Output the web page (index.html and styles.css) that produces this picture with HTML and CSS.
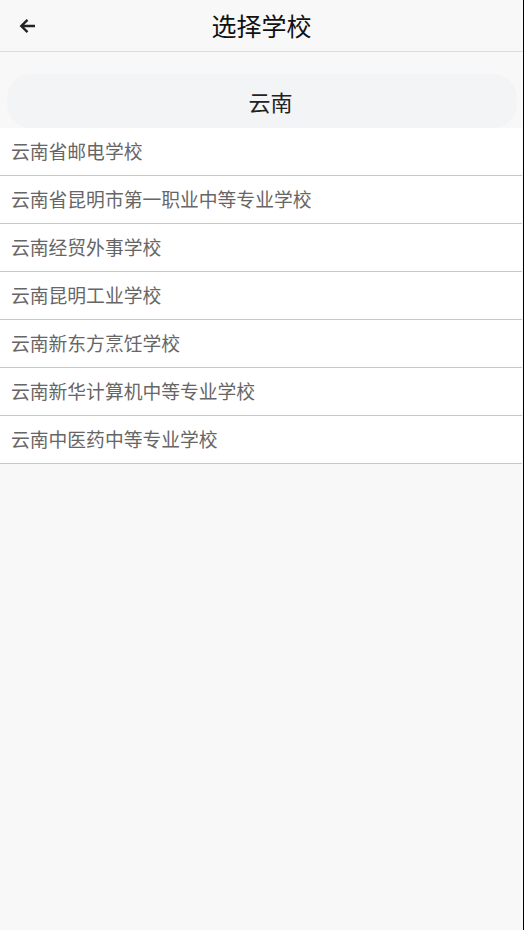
FILE: index.html
```html
<!DOCTYPE html>
<html lang="zh">
<head>
<meta charset="utf-8">
<link rel="stylesheet" href="styles.css">
</head>
<body>
<div class="app">
  <header class="topbar">
    <span class="back">
      <svg width="16" height="16" viewBox="0 0 16 16"><path d="M16 8H2.5M8.5 1.8L2.3 8l6.2 6.2" fill="none" stroke="#222" stroke-width="2.4"/></svg>
    </span>
    <h1 class="title">选择学校</h1>
  </header>
  <div class="search-wrap">
    <div class="search">云南</div>
  </div>
  <ul class="list">
    <li>云南省邮电学校</li>
    <li>云南省昆明市第一职业中等专业学校</li>
    <li>云南经贸外事学校</li>
    <li>云南昆明工业学校</li>
    <li>云南新东方烹饪学校</li>
    <li>云南新华计算机中等专业学校</li>
    <li>云南中医药中等专业学校</li>
  </ul>
</div>
</body>
</html>
```
FILE: styles.css
```css
html, body { margin: 0; padding: 0; background: #000; }
body { font-family: "Noto Sans CJK SC", "Noto Sans", sans-serif; }
.app { width: 523px; min-height: 930px; background: #f8f8f8; }
.topbar {
  position: relative;
  height: 51px;
  border-bottom: 1px solid #dcdcdc;
  display: flex; align-items: center; justify-content: center;
  background: #f8f8f8;
}
.back { position: absolute; left: 19px; top: 18px; display: flex; }
.title { margin: 0; font-size: 25px; font-weight: 400; color: #111; line-height: 1; }
.search-wrap { padding: 22px 6px 0 7px; }
.search {
  height: 54px; border-radius: 24px; background: #f3f4f6;
  display: flex; align-items: center; justify-content: center;
  padding-left: 17px;
  font-size: 22px; color: #222;
}
.list { list-style: none; margin: 0; padding: 0; background: #fff; width: 522px; }
.list li {
  height: 47px; border-bottom: 1px solid #c8c8c8;
  display: flex; align-items: center; padding-left: 11px;
  font-size: 18.8px; color: #666; line-height: 1;
}
```
